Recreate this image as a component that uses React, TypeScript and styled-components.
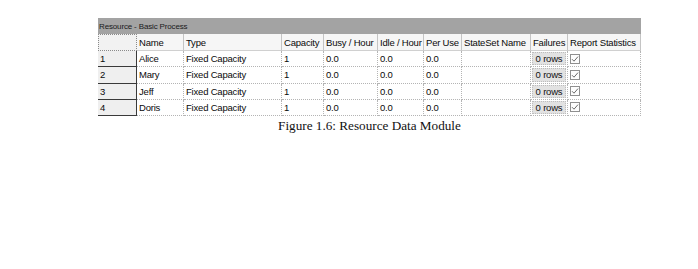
import React from "react";
import styled, { createGlobalStyle } from "styled-components";

const GlobalStyle = createGlobalStyle`
  html, body {
    margin: 0;
    padding: 0;
    background: #ffffff;
  }
`;

const resources = [
  { id: 1, name: "Alice" },
  { id: 2, name: "Mary" },
  { id: 3, name: "Jeff" },
  { id: 4, name: "Doris" },
];

const columns = [
  "Name",
  "Type",
  "Capacity",
  "Busy / Hour",
  "Idle / Hour",
  "Per Use",
  "StateSet Name",
  "Failures",
  "Report Statistics",
];

const Page = styled.div`
  width: 698px;
  height: 269px;
  overflow: hidden;
  display: flex;
  flex-direction: column;
`;

const Figure = styled.div`
  margin: 18px 0 0 98px;
  width: 543px;
  display: flex;
  flex-direction: column;
  align-items: center;
`;

const TitleBar = styled.div`
  align-self: stretch;
  height: 16px;
  background: #a3a3a3;
  display: flex;
  align-items: center;
  padding-left: 1px;
  font-family: "Liberation Sans", Arial, sans-serif;
  font-size: 8px;
  letter-spacing: -0.15px;
  color: #1a1a1a;
`;

const Grid = styled.div`
  align-self: stretch;
  display: grid;
  grid-template-columns: 39px 47px 98px 42px 54px 46px 38px 69px 37px 73px;
  grid-template-rows: 17px repeat(4, 16.25px);
  font-family: "Liberation Sans", Arial, sans-serif;
  font-size: 9.5px;
  letter-spacing: -0.2px;
  color: #0a0a0a;
`;

const Cell = styled.div<{ $kind?: "corner" | "head" | "row" | "data" }>`
  box-sizing: border-box;
  display: flex;
  align-items: center;
  padding-left: 2px;
  white-space: nowrap;
  overflow: hidden;
  background: ${(p) =>
    p.$kind === "row" ? "#efefef" : p.$kind === "head" ? "#f6f6f6" : "#ffffff"};
  border-right: ${(p) =>
    p.$kind === "row"
      ? "1px solid #3a3a3a"
      : p.$kind === "head"
      ? "1px solid #c4c4c4"
      : "1px dotted #b4b4b4"};
  border-bottom: ${(p) =>
    p.$kind === "row"
      ? "1px solid #3a3a3a"
      : p.$kind === "head"
      ? "1px solid #d0d0d0"
      : "1px dotted #b4b4b4"};
  ${(p) =>
    p.$kind === "corner" &&
    `
    border: 1px dotted #8a8a8a;
    background: #f2f2f2;
  `}
`;

const FailCell = styled(Cell)`
  padding: 1px;
`;

const RowsButton = styled.div`
  flex: 1;
  height: 100%;
  box-sizing: border-box;
  display: flex;
  align-items: center;
  justify-content: center;
  background: #e2e2e2;
  border: 1px dotted #bdbdbd;
  color: #111;
`;

const CheckBox = () => (
  <svg width="10" height="10" viewBox="0 0 10 10">
    <rect x="0.5" y="0.5" width="9" height="9" fill="#fdfdfd" stroke="#8f8f8f" />
    <path d="M2 5.2 L4 7.2 L8 2.6" fill="none" stroke="#6a6a6a" strokeWidth="1" />
  </svg>
);

const Caption = styled.div`
  margin-top: 2px;
  font-family: "Liberation Serif", "Times New Roman", serif;
  font-size: 13.2px;
  line-height: 15px;
  color: #111;
`;

export default function App() {
  return (
    <Page>
      <GlobalStyle />
      <Figure>
        <TitleBar>Resource - Basic Process</TitleBar>
        <Grid>
          <Cell $kind="corner" />
          {columns.map((c) => (
            <Cell key={c} $kind="head">
              {c}
            </Cell>
          ))}
          {resources.map((r) => (
            <React.Fragment key={r.id}>
              <Cell $kind="row">{r.id}</Cell>
              <Cell $kind="data">{r.name}</Cell>
              <Cell $kind="data">Fixed Capacity</Cell>
              <Cell $kind="data">1</Cell>
              <Cell $kind="data">0.0</Cell>
              <Cell $kind="data">0.0</Cell>
              <Cell $kind="data">0.0</Cell>
              <Cell $kind="data" />
              <FailCell $kind="data">
                <RowsButton>0 rows</RowsButton>
              </FailCell>
              <Cell $kind="data">
                <CheckBox />
              </Cell>
            </React.Fragment>
          ))}
        </Grid>
        <Caption>Figure 1.6: Resource Data Module</Caption>
      </Figure>
    </Page>
  );
}
